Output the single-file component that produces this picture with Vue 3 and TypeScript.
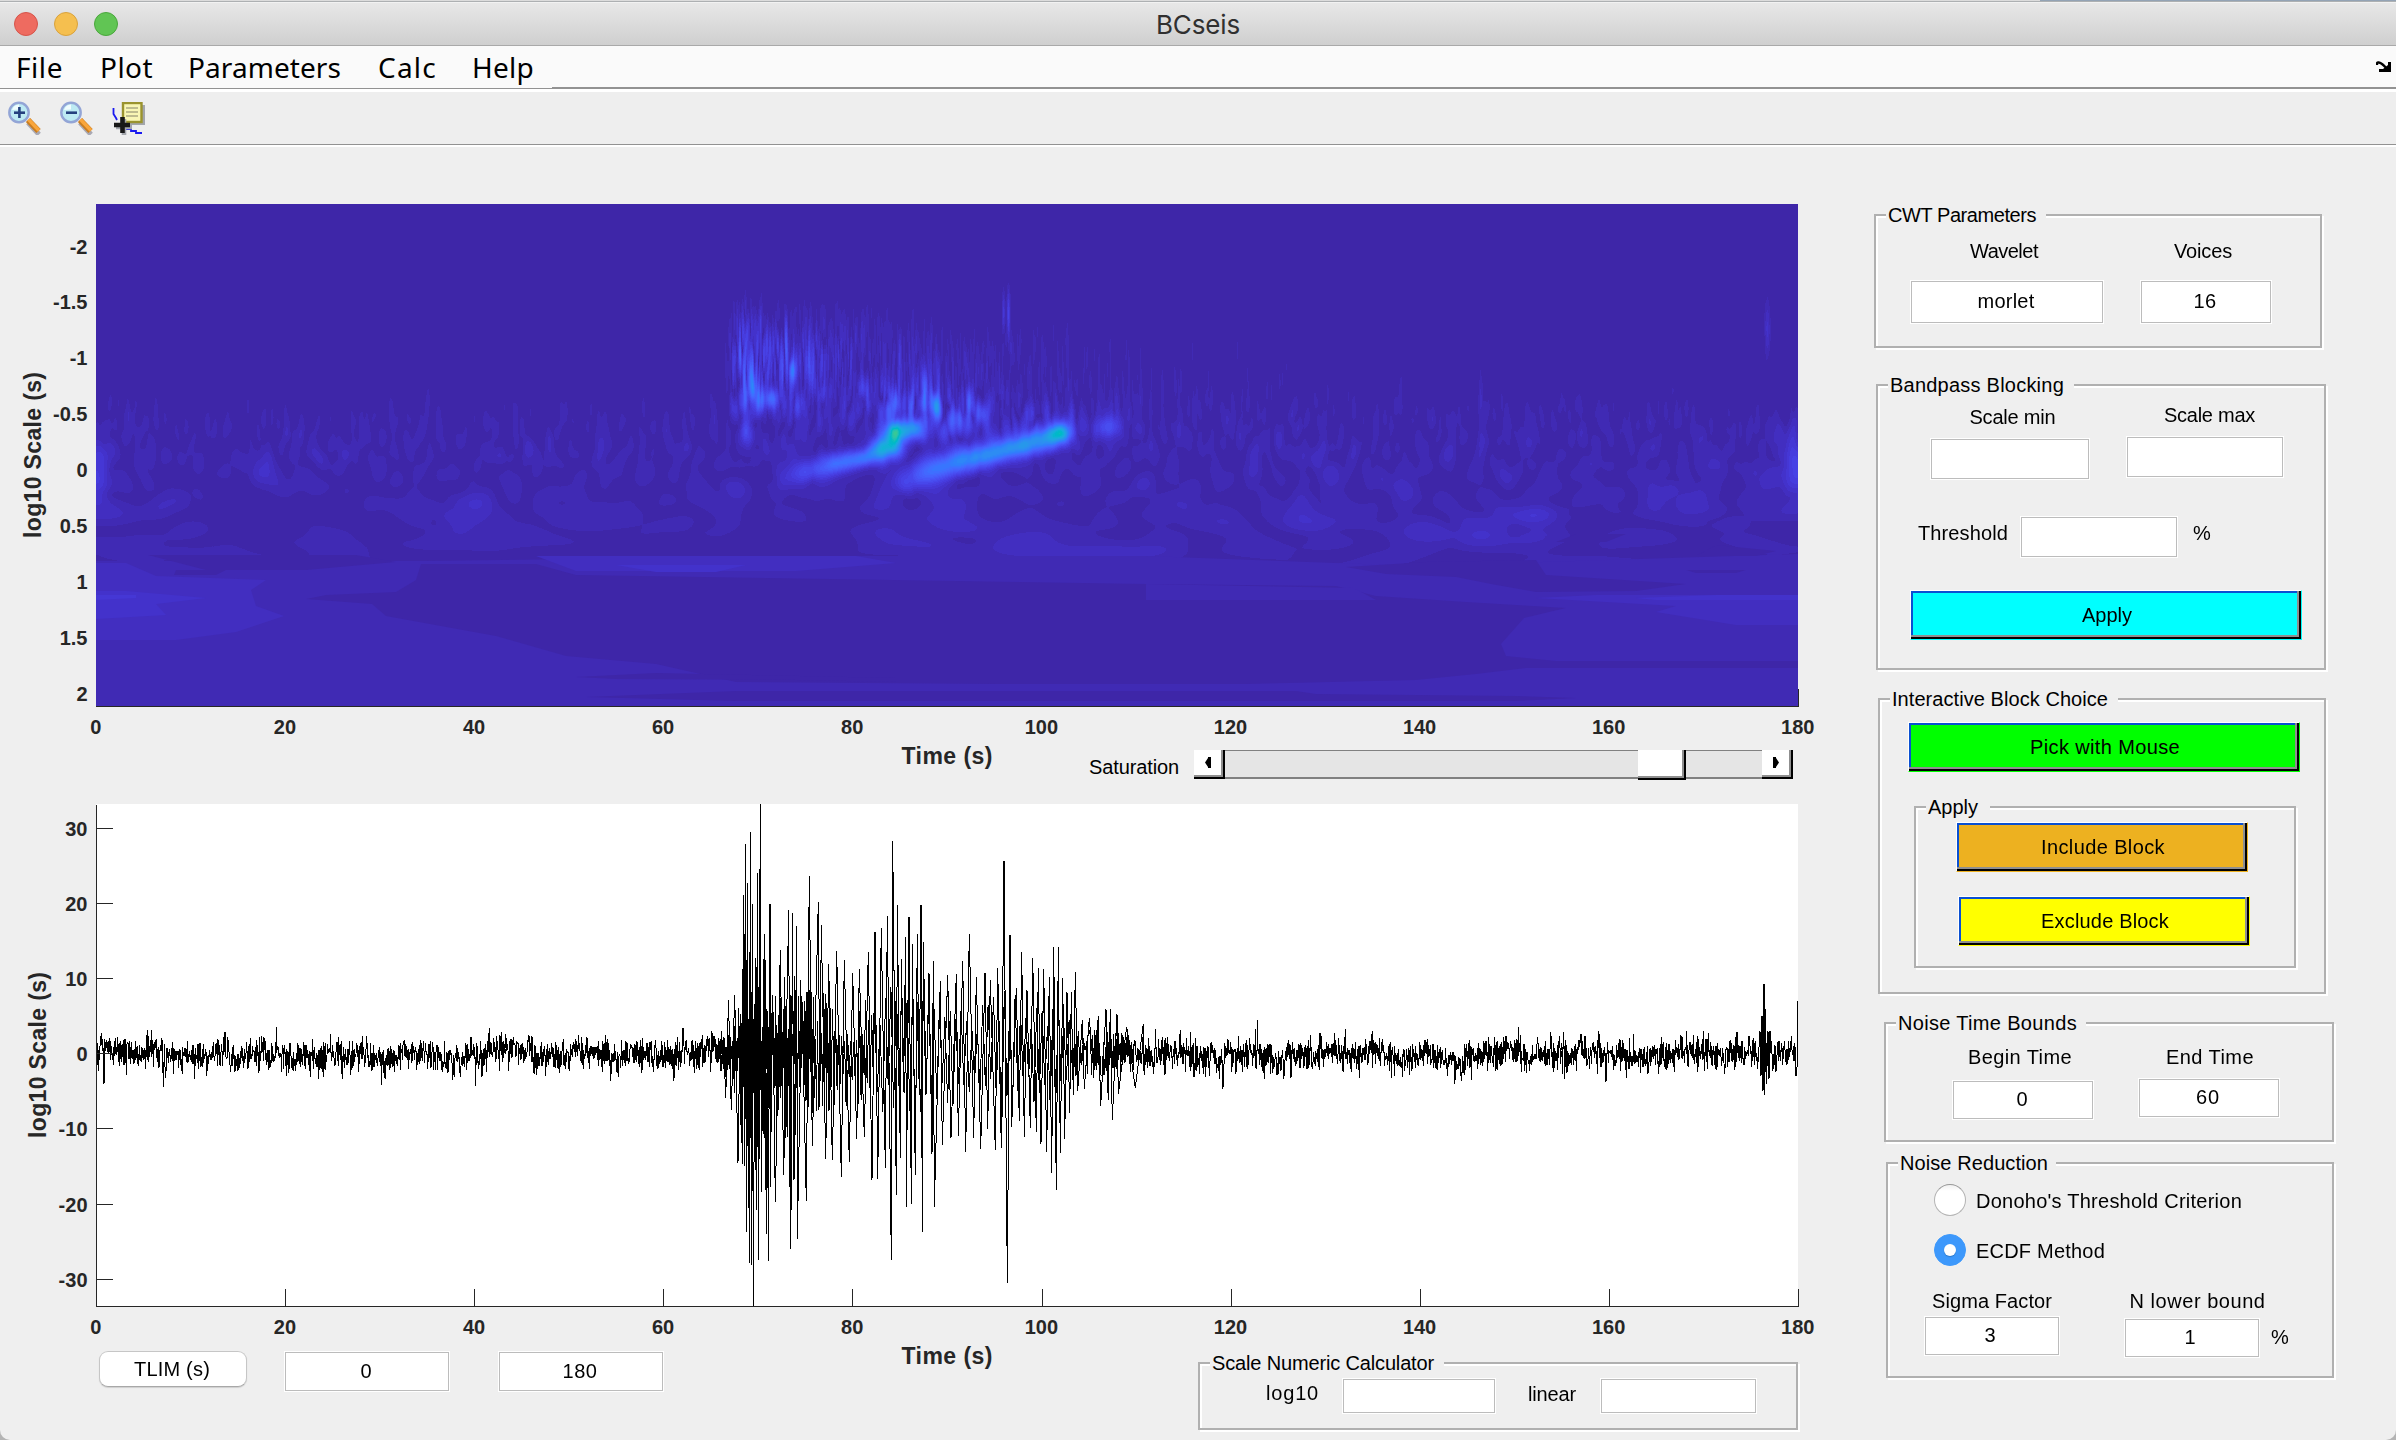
<script setup lang="ts">
import { onMounted, ref } from 'vue'

type Pt = [number, number]

const PLOT_W = 1702
const PX_PER_S = PLOT_W / 180
const timeTicks = [0, 20, 40, 60, 80, 100, 120, 140, 160, 180]
const scaleTicks = [-2, -1.5, -1, -0.5, 0, 0.5, 1, 1.5, 2]
const ampTicks = [30, 20, 10, 0, -10, -20, -30]
const menus = [
  { text: 'File', w: 47 },
  { text: 'Plot', w: 53 },
  { text: 'Parameters', w: 153 },
  { text: 'Calc', w: 59 },
  { text: 'Help', w: 62 },
]

function rng(seed: number) {
  let a = seed
  return () => {
    a = (a + 0x6d2b79f5) | 0
    let t = Math.imul(a ^ (a >>> 15), 1 | a)
    t = (t + Math.imul(t ^ (t >>> 7), 61 | t)) ^ t
    return ((t ^ (t >>> 14)) >>> 0) / 4294967296
  }
}

// Tightens or loosens letter spacing so a label takes the given width.
const vFit = {
  mounted(el: HTMLElement, binding: { value: number }) {
    const range = document.createRange()
    range.selectNodeContents(el)
    const natural = range.getBoundingClientRect().width
    const n = (el.textContent ?? '').trim().length
    el.style.letterSpacing = `${(binding.value - natural) / n}px`
  },
}

// ---- scalogram -------------------------------------------------------
const PARULA = [
  [62, 38, 168], [64, 42, 180], [66, 46, 192], [67, 50, 203], [69, 55, 213], [70, 60, 222], [71, 65, 229],
  [71, 71, 235], [72, 77, 240], [72, 82, 244], [71, 88, 248], [70, 94, 251], [69, 99, 253], [66, 105, 254],
  [62, 111, 255], [56, 117, 254], [50, 124, 252], [47, 129, 250], [46, 135, 247], [45, 140, 243],
  [43, 145, 239], [39, 151, 235], [37, 155, 232], [35, 160, 229], [32, 165, 227], [28, 169, 223],
  [24, 173, 219], [18, 177, 214], [8, 181, 208], [1, 184, 202], [2, 186, 195], [11, 189, 189],
  [25, 191, 182], [36, 193, 174], [44, 196, 167], [49, 198, 159], [55, 200, 151], [63, 202, 142], [74, 203, 132],
]
const MAP_H = 502
const mapCanvas = ref<HTMLCanvasElement | null>(null)

const ridges: [number, number, number, number][][] = [
  [[690, 274, 2.5, 8], [710, 267, 6, 8], [738, 259, 13, 7], [770, 253, 15, 6], [784, 246, 21, 8], [794, 240, 25, 9], [799, 229, 27, 8]],
  [[812, 277, 6, 9], [830, 267, 13, 9], [879, 253, 18, 8], [921, 242, 19, 8], [948, 235, 20, 8], [963, 229, 24, 8]],
]
// x, y, sigma x, sigma y, level
const spots: number[][] = [
  [799, 229, 3, 7, 7], [788, 244, 8, 6, 3], [963, 229, 7, 5, 6], [816, 224, 7, 7, 17], [1011, 223, 9, 8, 8],
  [655, 169, 1.6, 16, 11], [657, 186, 2.4, 10, 11], [649, 193, 2.2, 12, 10], [664, 196, 3, 9, 10],
  [675, 194, 5, 7, 12], [696, 166, 2.2, 8, 13], [643, 143, 1.2, 12, 5], [650, 229, 4, 9, 7],
  [828, 189, 2, 17, 12], [838, 199, 3, 8, 12], [796, 199, 3, 11, 10], [912, 109, 1.2, 16, 6], [907, 106, 1, 14, 3.5],
  [873, 196, 2, 10, 6], [885, 209, 4, 7, 6], [862, 213, 5, 8, 5], [852, 224, 9, 8, 3],
  [703, 200, 4, 9, 4], [664, 125, 1, 20, 3], [713, 150, 1.2, 20, 4], [716, 172, 2, 12, 5], [727, 188, 5, 8, 3],
  [672, 158, 1.4, 14, 4], [690, 140, 1.2, 20, 4], [766, 184, 4, 8, 4],
  [0, 266, 9, 22, 4.6], [1702, 266, 13, 24, 4.4], [1433, 311, 26, 7, 3], [1380, 332, 46, 9, 1.9],
  [1588, 296, 18, 14, 1.8], [1640, 320, 26, 12, 1], [350, 313, 22, 14, 1], [551, 322, 40, 12, 0.8],
  [975, 347, 80, 6, 1], [1671, 125, 2, 18, 3.2], [1384, 196, 1.6, 22, 1.6],
  [900, 330, 80, 10, 0.5], [1250, 318, 90, 8, 0.6],
]
// level, then the outline
const contours: [number, string][] = [
  [1, 'M0 357H330L700 352H1050L1320 362L1702 350V502H0Z'],
  [0, 'M52 351H260L300 358L210 366H110ZM80 366H130L120 371H78Z'],
  [2, 'M0 359H30L60 372L170 376L155 386L160 402L188 412L140 428L80 436H0Z'],
  [3, 'M0 387H30L110 394L60 400L70 411L0 415Z'],
  [4, 'M0 391H40V394L0 396Z'],
  [2, 'M440 352H760L800 359L700 367L480 367Z'],
  [3, 'M520 361H650L620 368H560Z'],
  [0, 'M325 360H440L480 371L1050 380L1240 382L1280 392L1370 398L1470 404L1428 414L1405 440L1410 452L1460 457H1702V464H1430L1380 470L1320 476L1150 480H900L640 478L560 460L470 452L400 432L290 412L276 400L210 395L230 391L300 388L320 376Z'],
  [1, 'M1050 380L1258 384L1280 396H1050Z'],
  [0, 'M1250 363L1330 358L1440 356L1450 371L1590 380L1540 387L1440 388L1395 380L1360 373L1290 370Z'],
  [2, 'M1440 394L1500 391H1702V421H1640L1560 408L1580 402Z'],
  [3, 'M1540 394L1620 391H1702V396H1560Z'],
  [0, 'M480 473L560 469L800 474V478L700 476L520 475ZM490 493L640 487H1200L1220 490L1420 492L1480 494L1420 497H640Z'],
  [0, 'M1480 330H1530L1510 338H1460ZM1620 341L1680 347L1660 352H1600ZM1590 366H1650L1640 369H1600Z'],
]

const sAt = (y: number) => (y - 43) / 111.8 - 2
const bump = (v: number, c: number, s: number) => Math.exp(-((v - c) ** 2) / (2 * s * s))

function ampAt(x: number, s: number) {
  const t = x / PX_PER_S
  let a = 0.16 + 0.94 / (1 + Math.exp(-(s + 0.58) / 0.12))
  a += (t < 67 ? 0 : 0.25 * Math.exp(-(t - 67) / 60)) * bump(s, -0.8, 0.25)
  const on = 1 / (1 + Math.exp(-(t - 67.2) / 0.4))
  a += on * bump(s, -0.97, 0.29) * (3.4 * Math.exp(-Math.max(0, t - 68) / 9) + 1.7 * Math.exp(-Math.max(0, t - 68) / 24))
  a += 3 * bump(t, 87, 4) * bump(s, -0.6, 0.15)
  a += 2 * bump(t, 94, 7) * bump(s, -0.45, 0.17)
  return a
}

function drawMap() {
  const ctx = mapCanvas.value?.getContext('2d')
  if (!ctx) return
  const rand = rng(41)
  const re = new Float32Array(PLOT_W * MAP_H)
  const im = new Float32Array(PLOT_W * MAP_H)
  for (let yc = 40; yc < 385; yc += 9) {
    const s = sAt(yc)
    const sx = Math.max(0.9, PX_PER_S * 10 ** s * 0.7)
    const sy = s < -0.6 ? 13 : 9
    const norm = Math.sqrt((Math.PI * sy) / (1.2 * 9))
    for (let xc = -2 * sx; xc < PLOT_W + 2 * sx; xc += sx * 1.2) {
      const cx = xc + (rand() - 0.5) * sx
      const cy = yc + (rand() - 0.5) * 9
      const ph = rand() * Math.PI * 2
      const mag = (0.5 + rand()) / norm
      const c = Math.cos(ph) * mag
      const d = Math.sin(ph) * mag
      const x0 = Math.max(0, Math.floor(cx - 3 * sx))
      const x1 = Math.min(PLOT_W - 1, Math.ceil(cx + 3 * sx))
      const y0 = Math.max(0, Math.floor(cy - 3 * sy))
      const y1 = Math.min(MAP_H - 1, Math.ceil(cy + 3 * sy))
      const gx: number[] = []
      for (let x = x0; x <= x1; x++) gx.push(bump(x, cx, sx))
      for (let y = y0; y <= y1; y++) {
        const gy = bump(y, cy, sy)
        for (let x = x0; x <= x1; x++) {
          const g = gy * gx[x - x0]
          re[y * PLOT_W + x] += c * g
          im[y * PLOT_W + x] += d * g
        }
      }
    }
  }
  const extra = new Float32Array(PLOT_W * MAP_H)
  for (const [cx, cy, sx, sy, lv] of spots) {
    for (let y = Math.max(0, Math.floor(cy - 3 * sy)); y < Math.min(MAP_H, cy + 3 * sy); y++)
      for (let x = Math.max(0, Math.floor(cx - 3 * sx)); x < Math.min(PLOT_W, cx + 3 * sx); x++)
        extra[y * PLOT_W + x] += lv * bump(x, cx, sx) * bump(y, cy, sy)
  }
  const ridge = new Float32Array(PLOT_W * MAP_H)
  for (const line of ridges)
    for (let i = 0; i < line.length - 1; i++) {
      const [xa, ya, la, wa] = line[i]
      const [xb, yb, lb, wb] = line[i + 1]
      for (let y = 200; y < 310; y++)
        for (let x = Math.floor(xa) - 30; x < xb + 30; x++) {
          let k = ((x - xa) * (xb - xa) + (y - ya) * (yb - ya)) / ((xb - xa) ** 2 + (yb - ya) ** 2)
          k = Math.min(1, Math.max(0, k))
          const d = Math.hypot(x - xa - k * (xb - xa), y - ya - k * (yb - ya))
          const v = (la + k * (lb - la)) * bump(d, 0, wa + k * (wb - wa))
          const p = y * PLOT_W + x
          if (v > ridge[p]) ridge[p] = v
        }
    }
  const img = ctx.createImageData(PLOT_W, MAP_H)
  for (let y = 0; y < MAP_H; y++) {
    const s = sAt(y)
    for (let x = 0; x < PLOT_W; x++) {
      const p = y * PLOT_W + x
      const lv = Math.hypot(re[p], im[p]) * ampAt(x, s) + extra[p] + ridge[p]
      const col = PARULA[Math.min(PARULA.length - 1, Math.floor(lv))]
      img.data[p * 4] = col[0]
      img.data[p * 4 + 1] = col[1]
      img.data[p * 4 + 2] = col[2]
      img.data[p * 4 + 3] = 255
    }
  }
  ctx.putImageData(img, 0, 0)
  for (const [lv, d] of contours) {
    ctx.fillStyle = `rgb(${PARULA[lv].join(',')})`
    ctx.fill(new Path2D(d))
  }
  ctx.fillStyle = '#262626'
  ctx.fillRect(0, MAP_H, PLOT_W + 1, 1)
  ctx.fillRect(PLOT_W, 485, 1, 18)
}
onMounted(drawMap)

// ---- seismogram ------------------------------------------------------
const ZERO_Y = 249.7
const UNIT = 7.52
const yTick = (v: number) => Math.round(ZERO_Y - v * UNIT - 0.5) + 0.5

const peaks: Pt[] = [
  [280, 311], [286, 160], [292, 275], [301, 124], [307, 338], [322, 246], [331, 41], [343, 426], [360, 338], [391, 473],
  [416, 355], [427, 364], [440, 402], [478, 254], [505, 331], [514, 400], [536, 515], [560, 476], [583, 503], [608, 540],
  [628, 530], [655, 479], [675, 420], [694, 408], [712, 373], [728, 152], [742, 340], [754, 500], [767, 435], [777, 376],
  [787, 457], [802, 426], [813, 340], [820, 450], [837, 540], [850, 506], [871, 565], [893, 547], [919, 543], [938, 506],
  [958, 426], [979, 553], [1005, 540], [1021, 562], [1043, 527], [1062, 210], [1080, 430], [1099, 586], [1115, 478],
  [1131, 592], [1148, 497], [1165, 527], [1181, 530], [1198, 553], [1211, 464], [1225, 464], [1238, 556], [1251, 597],
  [1264, 597], [1276, 538], [1297, 680], [1318, 675], [1345, 670], [1368, 648], [1381, 648], [1401, 663], [1430, 700], [1480, 692],
  [227, 910], [244, 946], [264, 1103], [277, 1106], [283, 1111], [289, 1307], [298, 1400], [304, 1404], [310, 1527],
  [319, 1242], [325, 1390], [334, 1188], [349, 1313], [355, 1392], [361, 1174], [376, 1218], [401, 1138], [421, 1357],
  [424, 1242], [432, 1153], [442, 1328], [469, 1216], [487, 1052], [527, 1092], [547, 1095], [574, 1144], [598, 1100],
  [620, 1032], [643, 1026], [666, 1153], [683, 1150], [706, 1117], [724, 1390], [739, 1197], [751, 1088], [769, 1233],
  [784, 1224], [796, 1138], [817, 1307], [846, 1076], [853, 1233], [877, 1050], [903, 1030], [925, 1024], [947, 1070],
  [971, 1030], [992, 1061], [1013, 1003], [1036, 1064], [1054, 1058], [1072, 1458], [1085, 997], [1108, 978], [1123, 1026],
  [1141, 1000], [1159, 1012], [1173, 1046], [1190, 1070], [1205, 1132], [1219, 1182], [1231, 1074], [1244, 1032],
  [1259, 955], [1283, 890], [1303, 884], [1352, 935], [1387, 975], [1405, 900], [1456, 881],
]

function buildTrace() {
  const rand = rng(7)
  const g = () => rand() + rand() + rand() - 1.5
  const event = peaks
    .map(([x, y]): Pt => [x / 3 + 554, (780 - y) / 22.25])
    .sort((a, b) => a[0] - b[0])
  const pts: Pt[] = []
  let slow = 0
  const quiet = (x0: number, x1: number, gain: number, step = 0.42) => {
    for (let x = x0; x < x1; x += step) {
      slow = slow * 0.96 + g() * 0.26
      let v = slow + g() * 2.3
      if (rand() < 0.04) v *= 1.55
      pts.push([x, v * gain])
    }
  }
  quiet(0, 628, 1)
  let prev: Pt = [628, 0]
  for (const p of event) {
    if (Math.sign(p[1]) === Math.sign(prev[1]))
      pts.push([(p[0] + prev[0]) / 2, -Math.sign(p[1]) * (4 + rand() * 5) * Math.min(1, Math.abs(p[1]) / 8)])
    pts.push(p)
    prev = p
  }
  quiet(1048, 1662, 1)
  pts.push([1664, 3], [1665, -3], [1666, 5], [1667, -5], [1668, 9.3], [1668.8, -5.5], [1669.6, 6], [1670.5, -4], [1672, 3], [1673, -3.4], [1674, 3])
  quiet(1675, 1699, 1)
  pts.push([1700, -3], [1701, -2], [1701.6, 7])
  return pts
}

// Fast jitter that fills the body of the burst.
function buildFill() {
  const rand = rng(19)
  const env: Pt[] = [
    [622, 2.5], [636, 4.5], [642, 9], [652, 14], [665, 15], [680, 11], [690, 12], [705, 11], [718, 9], [735, 8], [750, 7.5],
    [775, 7], [800, 8.5], [830, 8], [860, 6], [895, 6], [906, 11], [914, 8], [930, 6], [965, 7], [978, 3.2],
    [1000, 3.2], [1020, 3.2], [1048, 2.4],
  ]
  const pts: Pt[] = []
  let k = 0
  let sign = 1
  for (let x = 622; x < 1048; ) {
    while (k < env.length - 2 && x > env[k + 1][0]) k++
    const f = (x - env[k][0]) / (env[k + 1][0] - env[k][0])
    const a = env[k][1] + f * (env[k + 1][1] - env[k][1])
    const calm = x >= 975
    const spread = x < 778 || calm ? 0.15 + rand() * 0.85 : 0.5 + rand() * 0.6
    pts.push([x, sign * a * spread])
    sign = calm && rand() < 0.35 ? sign : -sign
    x += x < 690 ? 0.85 : x < 735 ? 1.05 : x < 778 ? 1.5 : calm ? 0.7 : 2.7
  }
  return pts
}
const toPath = (pts: Pt[]) => 'M' + pts.map(([x, v]) => `${x.toFixed(1)} ${(ZERO_Y - v * UNIT).toFixed(1)}`).join('L')
const tracePath = toPath(buildTrace())
const fillPath = toPath(buildFill())

const method = ref<'donoho' | 'ecdf'>('ecdf')
</script>

<template>
  <div class="window">
    <header class="titlebar">
      <div class="lights"><i class="red" /><i class="amber" /><i class="green" /></div>
      <span v-fit="84" class="title">BCseis</span>
    </header>
    <nav class="menubar">
      <span v-for="m in menus" :key="m.text" v-fit="m.w" :class="['menu', m.text.toLowerCase()]">{{ m.text }}</span>
      <svg class="dock" width="15" height="12" viewBox="0 0 15 12">
        <path d="M1 4V2.500Q1 1 3 1.500Q6 2 11 8" fill="none" stroke="#000" stroke-width="2.400" />
        <path d="M3 11V8H7L12 4V1H15V11Z" />
      </svg>
    </nav>
    <div class="toolbar">
      <svg v-for="kind in ['in', 'out']" :key="kind" class="tool" width="36" height="34" viewBox="0 0 36 34">
        <path d="M22 20L33 32" stroke="#a9a9b4" stroke-width="5" transform="translate(-1 1.5)" />
        <path d="M21 19L31.5 30" stroke="#c87d22" stroke-width="6" />
        <path d="M21.500 18.500L32 29.500" stroke="#f9a63c" stroke-width="3.500" />
        <circle cx="12" cy="11.500" r="9.700" fill="#bdeaf3" stroke="#93a5d6" stroke-width="2.400" />
        <path d="M5 9a8 8 0 0 1 7-5.500v5z" fill="#f0fcfe" />
        <path d="M7 11.700H18" stroke="#24407e" stroke-width="2.600" />
        <path v-if="kind === 'in'" d="M12.400 6V17" stroke="#24407e" stroke-width="2.600" />
      </svg>
      <svg class="tip" width="36" height="34" viewBox="0 0 36 34">
        <rect x="14" y="3" width="20" height="20" fill="#a3a6ac" />
        <rect x="12" y="1" width="18.500" height="19" fill="#f8f6b4" stroke="#9a932e" stroke-width="2.400" />
        <path d="M15 6H27M15 10H27M15 14H27" stroke="#aba981" stroke-width="1.600" />
        <path d="M2.500 6V12L5 16L6 18" fill="none" stroke="#1a1af0" stroke-width="1.800" />
        <path d="M15 27H20V29H25V31H31" fill="none" stroke="#1a1af0" stroke-width="1.800" />
        <path d="M5 25H21M13 17V33" stroke="#a3a6ac" stroke-width="4.600" />
        <path d="M3 23H19M11.500 15V31" stroke="#181818" stroke-width="4.600" />
      </svg>
    </div>

    <main class="content">
      <section class="figures">
        <div class="plot first">
          <svg class="yaxis" width="96" height="503">
            <text v-for="(v, i) in scaleTicks" :key="v" class="tick end" x="87.500" :y="49.5 + i * 55.9">{{ v }}</text>
            <text class="axis" transform="translate(41 251) rotate(-90)" textLength="166">log10 Scale (s)</text>
          </svg>
          <canvas ref="mapCanvas" width="1703" height="503" />
        </div>
        <svg class="xaxis" width="1874" height="43">
          <text v-for="t in timeTicks" :key="t" class="tick mid" :x="95.8 + t * PX_PER_S" y="26.500">{{ t }}</text>
          <text class="axis" x="947" y="57" textLength="91">Time (s)</text>
        </svg>
        <div class="satrow">
          <span v-fit="90" class="label sat">Saturation</span>
          <div class="slider">
            <span class="cap"><svg width="6" height="11"><path d="M0 5.500L3 1V0H6V11H3V10Z" /></svg></span>
            <span class="track"><i class="thumb" /></span>
            <span class="cap"><svg width="6" height="11"><path d="M6 5.500L3 1V0H0V11H3V10Z" /></svg></span>
          </div>
        </div>
        <div class="plot">
          <svg class="yaxis" width="96" height="503">
            <text v-for="v in ampTicks" :key="v" class="tick end" x="87.500" :y="yTick(v) + 7">{{ v }}</text>
            <text class="axis" transform="translate(45.500 251) rotate(-90)" textLength="166">log10 Scale (s)</text>
          </svg>
          <svg class="trace" width="1703" height="503">
            <rect width="1702" height="502" fill="#fff" />
            <path :d="fillPath" class="wave" />
            <path :d="tracePath" class="wave" />
            <g class="rule">
              <path d="M.5 1V502.500H1702.500" />
              <path v-for="v in ampTicks" :key="v" :d="`M0 ${yTick(v)}H17`" />
              <path v-for="t in timeTicks.slice(1)" :key="t" :d="`M${Math.round(t * PX_PER_S) + 0.5} 485V502`" />
            </g>
          </svg>
        </div>
        <svg class="xaxis" width="1874" height="44">
          <text v-for="t in timeTicks" :key="t" class="tick mid" :x="95.8 + t * PX_PER_S" y="26.500">{{ t }}</text>
          <text class="axis" x="947" y="57" textLength="91">Time (s)</text>
        </svg>
        <div class="limits">
          <button class="tlim"><span v-fit="76">TLIM (s)</span></button>
          <span class="field t0">0</span>
          <span class="field t1"><span v-fit="35">180</span></span>
          <div class="panel calc">
            <span class="legend"><span v-fit="222">Scale Numeric Calculator</span></span>
            <span v-fit="53" class="label c1">log10</span>
            <span class="field c2" />
            <span v-fit="48" class="label c3">linear</span>
            <span class="field c4" />
          </div>
        </div>
      </section>

      <aside class="side">
        <div class="panel cwt">
          <span class="legend"><span v-fit="148">CWT Parameters</span></span>
          <div class="row">
            <div class="col a"><span v-fit="68" class="label">Wavelet</span><span class="field"><span v-fit="57">morlet</span></span></div>
            <div class="col b"><span v-fit="58" class="label">Voices</span><span class="field"><span v-fit="23">16</span></span></div>
          </div>
        </div>

        <div class="panel band">
          <span class="legend"><span v-fit="174">Bandpass Blocking</span></span>
          <div class="row">
            <div class="col a"><span v-fit="86" class="label">Scale min</span><span class="field" /></div>
            <div class="col b"><span v-fit="91" class="label">Scale max</span><span class="field" /></div>
          </div>
          <div class="row threshold">
            <span v-fit="90" class="label">Threshold</span><span class="field" /><span class="label pct">%</span>
          </div>
          <button class="push cyan"><span v-fit="50">Apply</span></button>
        </div>

        <div class="panel block">
          <span class="legend"><span v-fit="216">Interactive Block Choice</span></span>
          <button class="push lime"><span v-fit="150">Pick with Mouse</span></button>
          <div class="panel sub">
            <span class="legend"><span v-fit="50">Apply</span></span>
            <button class="push orange"><span v-fit="124">Include Block</span></button>
            <button class="push yellow"><span v-fit="128">Exclude Block</span></button>
          </div>
        </div>

        <div class="panel bounds">
          <span class="legend"><span v-fit="179">Noise Time Bounds</span></span>
          <div class="row">
            <div class="col a"><span v-fit="104" class="label">Begin Time</span><span class="field">0</span></div>
            <div class="col b"><span v-fit="88" class="label">End Time</span><span class="field"><span v-fit="24">60</span></span></div>
          </div>
        </div>

        <div class="panel reduce">
          <span class="legend"><span v-fit="148">Noise Reduction</span></span>
          <label class="choice" @click="method = 'donoho'">
            <i :class="['radio', { on: method === 'donoho' }]" /><span v-fit="266" class="label">Donoho's Threshold Criterion</span>
          </label>
          <label class="choice" @click="method = 'ecdf'">
            <i :class="['radio', { on: method === 'ecdf' }]" /><span v-fit="129" class="label">ECDF Method</span>
          </label>
          <div class="row">
            <div class="col a"><span v-fit="120" class="label">Sigma Factor</span><span class="field">3</span></div>
            <div class="col b"><span v-fit="136" class="label">N lower bound</span><span class="field">1</span></div>
            <span class="label pct">%</span>
          </div>
        </div>
      </aside>
    </main>
  </div>
</template>

<style>
html,
body {
  background: #b4b4b4;
}
</style>

<style scoped>
.window {
  display: flex;
  flex-direction: column;
  box-sizing: border-box;
  width: 2396px;
  height: 1440px;
  overflow: hidden;
  background: #efefef;
  border-radius: 0 0 10px 10px;
  font: 20px/24px "Liberation Sans", Arial, sans-serif;
  color: #000;
}
.titlebar {
  position: relative;
  display: flex;
  justify-content: center;
  box-sizing: border-box;
  height: 46px;
  padding-top: 2px;
  border-bottom: 1px solid #a9a9a9;
  background: linear-gradient(90deg, #dcdcdc 2040px, #93a3b5 2040px) 0 0 / 100% 1px no-repeat,
    linear-gradient(#adb0b2, #adb0b2) 0 1px / 100% 1px no-repeat,
    linear-gradient(#f2f2f2, #f2f2f2) 0 2px / 100% 1px no-repeat, linear-gradient(#e9e9e9, #cfcfcf);
  flex: none;
}
.title {
  margin-top: 6px;
  font: 26px/34px Inter, Roboto, sans-serif;
  color: #303030;
}
.lights {
  position: absolute;
  left: 14px;
  top: 12px;
  display: flex;
  gap: 16px;
}
.lights i {
  box-sizing: border-box;
  width: 24px;
  height: 24px;
  border-radius: 50%;
}
.red { background: #ee6b60; border: 1px solid #d6544a; }
.amber { background: #f5bf4f; border: 1px solid #d9a23c; }
.green { background: #61c554; border: 1px solid #4aa73c; }

.menubar {
  display: flex;
  align-items: flex-start;
  box-sizing: border-box;
  flex: none;
  height: 46px;
  background: linear-gradient(#929292, #929292) 552px 41px / 1844px 2px no-repeat,
    linear-gradient(#929292, #929292) 0 42px / 100% 1px no-repeat,
    linear-gradient(#fff, #fff) 0 43px / 100% 3px no-repeat, #fafafa;
}
.menu {
  flex: none;
  margin-top: 1px;
  font: 28px/40px "Noto Sans", "Open Sans", sans-serif;
  white-space: nowrap;
}
.file { margin-left: 16px; width: 47px; }
.plot.menu { margin-left: 37px; width: 53px; }
.parameters { margin-left: 35px; width: 153px; }
.calc.menu { margin-left: 37px; width: 59px; }
.help { margin-left: 35px; width: 62px; }
.dock { margin: 15px 5px 0 auto; }

.toolbar {
  display: flex;
  align-items: flex-start;
  box-sizing: border-box;
  flex: none;
  height: 55px;
  padding: 9px 0 0 7px;
  background: linear-gradient(#929292, #929292) 0 52px / 100% 1px no-repeat,
    linear-gradient(#fff, #fff) 0 53px / 100% 2px no-repeat, #eee;
}
.tool { margin-right: 16px; }
.tip { margin-top: 1px; }

.content { display: flex; align-items: flex-start; }
.figures { width: 1874px; flex: none; }
.plot.first { margin-top: 57px; }
div.plot { display: flex; height: 503px; }
.xaxis, .yaxis, .trace, canvas { display: block; overflow: visible; flex: none; }
.trace { overflow: hidden; }
.tick { font: bold 20px "Liberation Sans", Arial, sans-serif; fill: #262626; }
.axis { font: bold 23px "Liberation Sans", Arial, sans-serif; fill: #262626; text-anchor: middle; }
.mid { text-anchor: middle; }
.end { text-anchor: end; }
.wave { fill: none; stroke: #000; stroke-width: 1; stroke-linejoin: bevel; shape-rendering: crispEdges; }
.rule path { fill: none; stroke: #262626; stroke-width: 1; shape-rendering: crispEdges; }

.satrow { display: flex; align-items: flex-start; height: 54px; }
.label { white-space: nowrap; flex: none; }
.sat { margin: 5px 0 0 1089px; width: 90px; }
.slider { display: flex; margin-left: 15px; height: 29px; }
.cap, .thumb {
  box-sizing: border-box;
  width: 31px;
  height: 29px;
  background: #fff;
  border-right: 2px solid #000;
  border-bottom: 2px solid #000;
  box-shadow: inset -2px -2px #8f8f8f;
}
.cap { display: flex; align-items: flex-start; justify-content: center; padding: 7px 2px 0 0; }
.track {
  box-sizing: border-box;
  width: 537px;
  height: 29px;
  background: #e5e5e5;
  border-top: 1px solid #808080;
  border-bottom: 2px solid #808080;
}
.thumb { display: block; width: 48px; height: 30px; margin: -1px 0 0 413px; }

.field {
  display: flex;
  align-items: center;
  justify-content: center;
  box-sizing: border-box;
  flex: none;
  padding: 0 2px 2px 0;
  background: #fff;
  border: 1px solid #fff;
  box-shadow: inset 0 0 0 1px #bcbcbc;
}
.limits { display: flex; align-items: flex-start; }
.tlim {
  box-sizing: border-box;
  width: 148px;
  height: 36px;
  margin: 0 0 0 99px;
  padding: 0 2px 1px 0;
  border: 1px solid #c6c6c6;
  border-bottom-color: #a8a8a8;
  border-radius: 9px;
  background: #fff;
  box-shadow: 0 1px 1px #cfcfcf;
  font: inherit;
}
.t0, .t1 { width: 166px; height: 41px; }
.t0 { margin-left: 37px; }
.t1 { margin-left: 48px; }

.panel {
  position: relative;
  box-sizing: border-box;
  border: 2px solid #b0b0b0;
  box-shadow: 2px 2px #fff, inset 2px 2px #fff;
}
.legend {
  position: absolute;
  box-sizing: border-box;
  left: 10px;
  top: -13px;
  height: 24px;
  padding-left: 2px;
  background: #efefef;
  white-space: nowrap;
}
.panel.calc { display: flex; align-items: flex-start; margin: 11px 0 0 534px; width: 600px; height: 68px; }
.calc .legend { width: 234px; }
.c1 { margin: 17px 0 0 66px; width: 53px; }
.c2 { margin: 14px 0 0 23px; width: 154px; height: 36px; }
.c3 { margin: 18px 0 0 32px; width: 48px; }
.c4 { margin: 14px 0 0 24px; width: 157px; height: 36px; }

.side { display: flex; flex-direction: column; align-items: flex-start; padding-top: 67px; }
.row { display: flex; align-items: flex-start; }
.col { display: flex; flex-direction: column; align-items: center; }
.col .field { align-self: stretch; }

.cwt { width: 448px; height: 134px; }
.cwt .legend { width: 160px; }
.cwt .label { margin: 23px 6px 17px 0; }
.cwt .field { height: 44px; }
.cwt .a { margin-left: 34px; width: 194px; }
.cwt .b { margin-left: 36px; width: 132px; }

.band { margin: 36px 0 0 2px; width: 450px; height: 286px; }
.band .legend { width: 186px; }
.band .field { height: 42px; }
.band .a { margin-left: 52px; width: 160px; }
.band .a .label { margin: 19px 0 9px 5px; }
.band .b { margin-left: 36px; width: 158px; }
.band .b .label { margin: 17px 0 9px 9px; }
.threshold { margin-top: 36px; }
.threshold .label { margin: 5px 0 0 40px; width: 91px; }
.threshold .field { margin-left: 11px; width: 158px; }
.threshold .pct { margin-left: 15px; }

.push {
  display: block;
  box-sizing: border-box;
  width: 392px;
  height: 50px;
  padding: 0 0 1px 2px;
  font: inherit;
  border: 1px solid;
  border-top-color: #fff;
  border-left-color: #fff;
  box-shadow: inset -2px -2px #000, inset -4px -4px #8f8f8f, inset 2px 2px #0a50d2;
}
.cyan { margin: 32px 0 0 32px; background: #0ff; border-right-color: #0ff; border-bottom-color: #0ff; }
.lime { margin: 22px 0 0 28px; background: #0f0; border-right-color: #0f0; border-bottom-color: #0f0; }
.orange { margin: 14px 0 0 40px; width: 292px; background: #edb120; border-right-color: #edb120; border-bottom-color: #edb120; }
.yellow { margin: 24px 0 0 42px; width: 292px; background: #ff0; border-right-color: #ff0; border-bottom-color: #ff0; }

.block { margin: 28px 0 0 4px; width: 448px; height: 296px; }
.block > .legend { width: 228px; }
.sub { margin: 34px 0 0 34px; width: 382px; height: 162px; }
.sub .legend { width: 64px; }

.bounds { margin: 28px 0 0 10px; width: 450px; height: 120px; }
.bounds .legend { width: 190px; }
.bounds .field { height: 40px; }
.bounds .a { margin-left: 66px; width: 142px; }
.bounds .a .label { margin: 21px 6px 11px 0; }
.bounds .b { margin-left: 44px; width: 142px; }
.bounds .b .label { margin: 21px 0 9px 2px; }

.reduce { margin: 20px 0 0 12px; width: 448px; height: 216px; }
.reduce .legend { width: 158px; }
.choice { display: flex; align-items: center; gap: 10px; height: 32px; margin: 20px 0 0 46px; }
.choice .label { padding-top: 1px; }
.choice + .choice { margin-top: 18px; }
.radio {
  display: flex;
  align-items: center;
  justify-content: center;
  box-sizing: border-box;
  width: 32px;
  height: 32px;
  border-radius: 50%;
  border: 1px solid #b4b4b4;
  border-top-color: #989898;
  background: linear-gradient(#f0f0f0, #fff 20%);
}
.radio.on { background: #3d98fb; border-color: #3d98fb; }
.radio.on::after { content: ""; width: 12px; height: 12px; border-radius: 50%; background: #fff; box-shadow: 0 1px 1px #2b78cc; }
.reduce .field { height: 40px; padding-right: 4px; }
.reduce .a { margin-left: 36px; width: 136px; }
.reduce .a .label { margin: 23px 0 3px; }
.reduce .b { margin-left: 64px; width: 136px; }
.reduce .b .label { margin: 23px -5px 5px 6px; }
.reduce .row > .pct { margin: 59px 0 0 11px; }
</style>
